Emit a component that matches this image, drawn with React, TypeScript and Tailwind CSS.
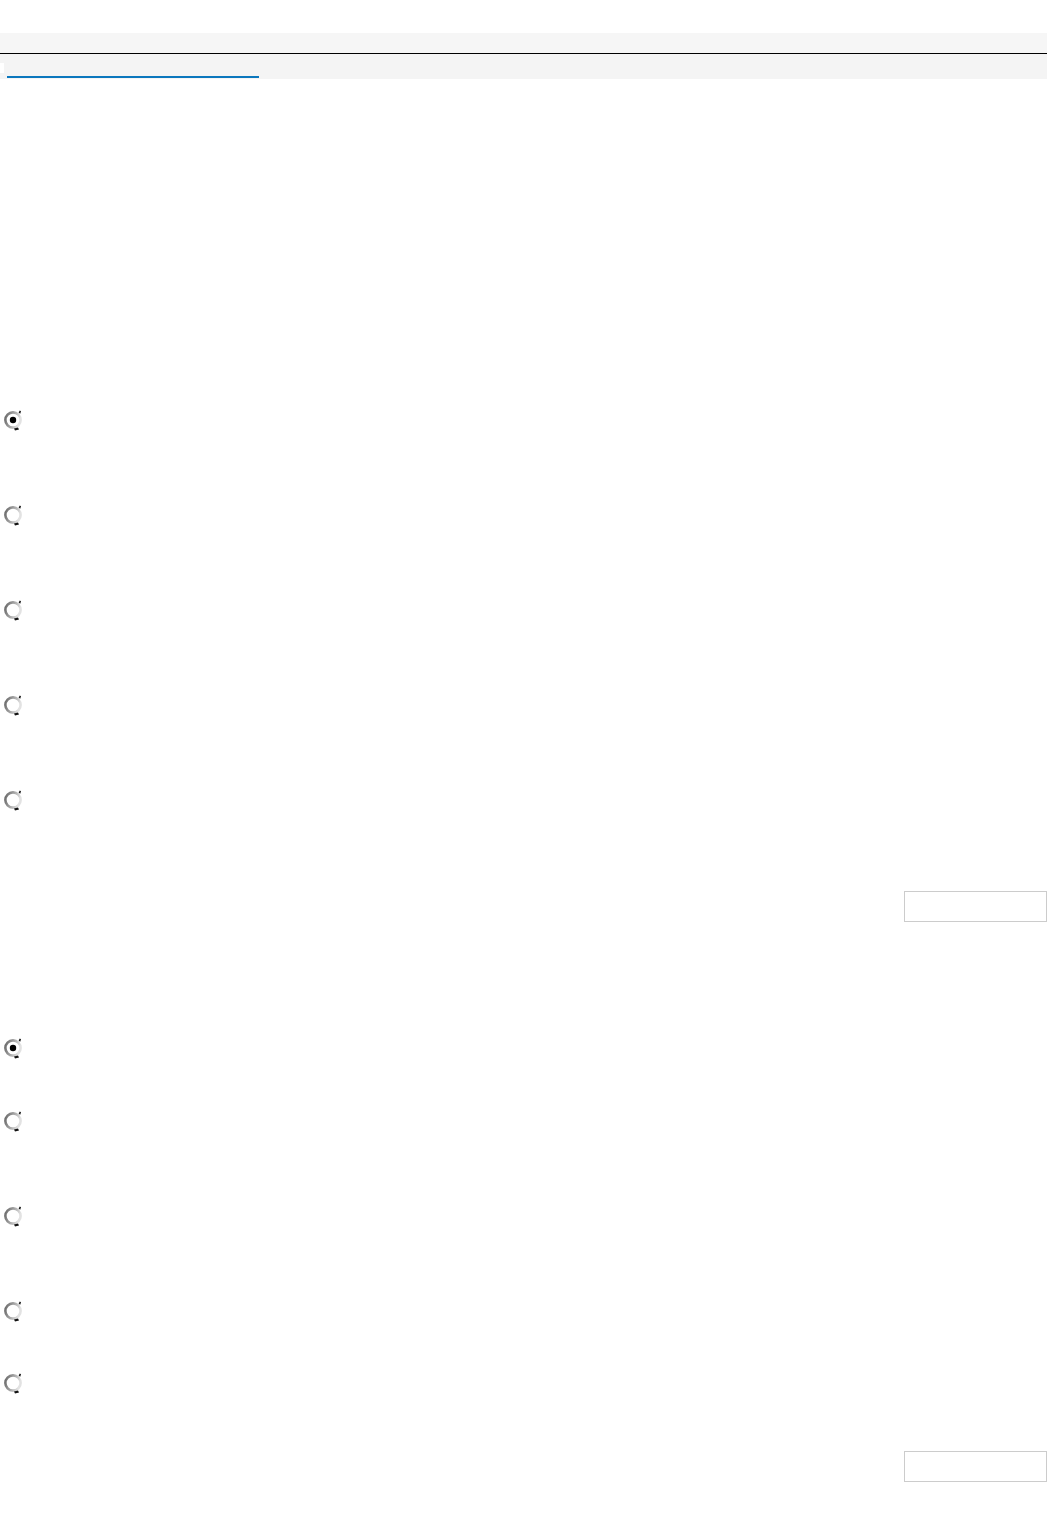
import React from "react";

function Radio({ checked }: { checked?: boolean }) {
  return (
    <svg width="22" height="24" viewBox="0 0 22 24" className="block">
      <defs>
        <linearGradient id="ring" x1="0" y1="0" x2="1" y2="0.3">
          <stop offset="0" stopColor="#666666" />
          <stop offset="0.5" stopColor="#a0a0a0" />
          <stop offset="1" stopColor="#e2e2e2" />
        </linearGradient>
      </defs>
      <circle cx="10" cy="12" r="7.6" fill="#ffffff" stroke="url(#ring)" strokeWidth="2.6" />
      <path d="M15.6 4.6 L16.8 2.6 L18 3.2 L17.2 5.8 Z" fill="#111" />
      <path d="M11 20.6 L15 19.4 L16 21.6 L12 22.6 Z" fill="#111" />
      {checked && <circle cx="10" cy="12" r="3.2" fill="#000" />}
    </svg>
  );
}

function Button() {
  return (
    <div className="flex justify-end">
      <div className="w-[143px] h-[31px] border border-[#cccccc] bg-white" />
    </div>
  );
}

function Group({ gaps, first }: { gaps: number[]; first: string }) {
  return (
    <div className="flex flex-col">
      {gaps.map((g, i) => (
        <div key={i} className={i === 0 ? first : ""} style={{ marginTop: i === 0 ? undefined : g }}>
          <div className="pl-[3px] h-[22px]">
            <Radio checked={i === 0} />
          </div>
        </div>
      ))}
    </div>
  );
}

export default function App() {
  return (
    <div className="w-[1047px] min-h-[1530px] bg-white font-['Liberation_Sans',sans-serif]">
      <div className="h-[33px]" />
      <div className="h-[21px] bg-[#f6f6f6] border-b border-black" />
      <div className="h-[25px] bg-[#f4f4f4] flex items-start">
        <div className="mt-[9px] w-[4px] h-[10px] bg-white" />
        <div className="ml-[3px] mt-[22px] w-[252px] h-[2px] bg-[#0b77bd]" />
      </div>

      <Group first="mt-[329px]" gaps={[0, 73, 73, 73, 73]} />
      <div className="mt-[81px]">
        <Button />
      </div>

      <Group first="mt-[114px]" gaps={[0, 51, 73, 73, 50]} />
      <div className="mt-[58px]">
        <Button />
      </div>
    </div>
  );
}
